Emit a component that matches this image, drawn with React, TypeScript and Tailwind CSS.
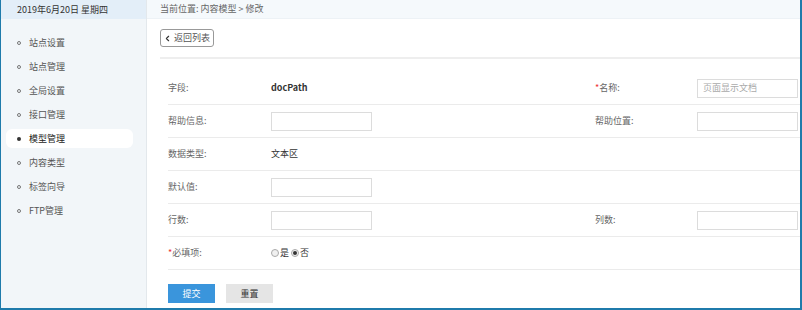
import { ChevronLeft } from "lucide-react";

const menu = ["站点设置", "站点管理", "全局设置", "接口管理", "模型管理", "内容类型", "标签向导", "FTP管理"];

function Input({ placeholder }: { placeholder?: string }) {
  return (
    <div className="flex h-[19px] w-[101px] items-center border border-[#dcdcdc] bg-white px-[5px] text-[9px] text-[#aaa]">
      {placeholder}
    </div>
  );
}

function Radio({ checked }: { checked?: boolean }) {
  return (
    <span className="flex h-[8px] w-[8px] items-center justify-center rounded-full border border-[#aaa] bg-[#f0f0f0]">
      {checked && <span className="h-[4px] w-[4px] rounded-full bg-[#333]" />}
    </span>
  );
}

function Row({ children }: { children: React.ReactNode }) {
  return (
    <div className="grid h-[33px] grid-cols-[103px_324px_102px_1fr] items-center border-b border-[#ebebeb]">
      {children}
    </div>
  );
}

export default function App() {
  return (
    <div className="flex h-[310px] w-[802px] overflow-hidden border-b-2 border-l border-r-2 border-[#1f7bab] bg-white font-['Noto_Sans_CJK_SC',sans-serif] text-[9px] text-[#444]">
      <aside className="flex w-[146px] flex-col border-r border-[#e3e8ec] bg-[#f2f6f9]">
        <div className="flex h-[19px] items-center bg-[#e3eef8] pl-[16px] text-[#333]">2019年6月20日 星期四</div>
        <ul className="mt-[14px] flex flex-col gap-[5px] px-[5px]">
          {menu.map((m) => {
            const active = m === "模型管理";
            return (
              <li
                key={m}
                className={`flex h-[19px] w-[127px] items-center gap-[8px] rounded-[6px] pl-[11px] ${active ? "bg-white text-[#222]" : "text-[#555]"}`}
              >
                <span
                  className={`h-[4px] w-[4px] rounded-full ${active ? "bg-[#333]" : "border border-[#777]"}`}
                />
                {m}
              </li>
            );
          })}
        </ul>
      </aside>

      <main className="flex flex-1 flex-col">
        <div className="flex h-[19px] items-center border-b border-[#edf2f6] bg-[#f5f9fc] pl-[13px] text-[#666]">
          当前位置: 内容模型 &gt; 修改
        </div>
        <div className="ml-[13px] mt-[10px]">
          <button className="flex h-[18px] w-[54px] items-center gap-[2px] rounded-[3px] border border-[#999] bg-white pl-[2px] text-[9px] text-[#555]">
            <ChevronLeft size={9} strokeWidth={3} className="text-[#333]" />
            返回列表
          </button>
        </div>
        <div className="ml-[13px] mt-[10px] h-[2px] bg-[#eeeeee]" />

        <div className="ml-[21px] mt-[13px] text-[#666]">
          <Row>
            <span>字段:</span>
            <span className="font-bold text-[#333]">docPath</span>
            <span>
              <span className="text-[#e33]">*</span>名称:
            </span>
            <Input placeholder="页面显示文档" />
          </Row>
          <Row>
            <span>帮助信息:</span>
            <Input />
            <span>帮助位置:</span>
            <Input />
          </Row>
          <Row>
            <span>数据类型:</span>
            <span className="text-[#333]">文本区</span>
            <span />
            <span />
          </Row>
          <Row>
            <span>默认值:</span>
            <Input />
            <span />
            <span />
          </Row>
          <Row>
            <span>行数:</span>
            <Input />
            <span>列数:</span>
            <Input />
          </Row>
          <Row>
            <span>
              <span className="text-[#e33]">*</span>必填项:
            </span>
            <span className="flex items-center text-[#333]">
              <Radio />
              <span className="ml-[1px] mr-[2px]">是</span>
              <Radio checked />
              <span className="ml-[1px]">否</span>
            </span>
            <span />
            <span />
          </Row>
          <div className="mt-[14px] flex gap-[11px]">
            <button className="h-[19px] w-[47px] bg-[#3a95dc] text-[9px] text-white">提交</button>
            <button className="h-[19px] w-[47px] bg-[#e5e5e5] text-[9px] text-[#333]">重置</button>
          </div>
        </div>
      </main>
    </div>
  );
}
